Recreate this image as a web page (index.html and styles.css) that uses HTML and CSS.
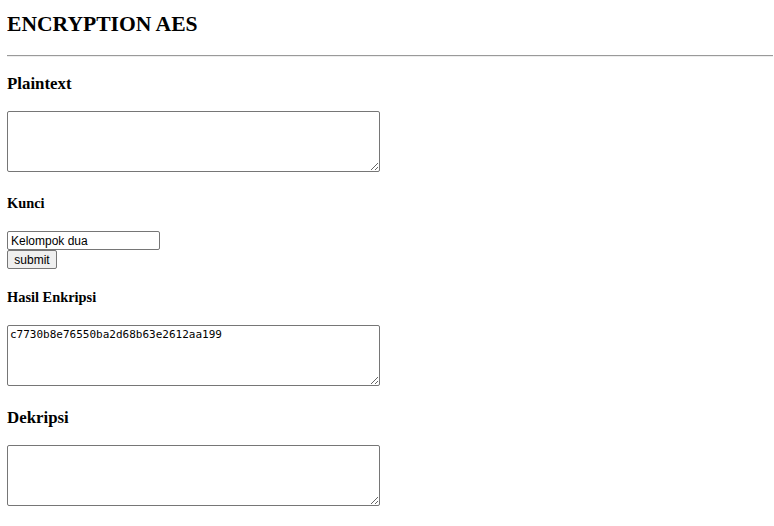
FILE: index.html
```html
<!DOCTYPE html>
<html>
<head>
<meta charset="utf-8">
<title>Encryption AES</title>
<link rel="stylesheet" href="styles.css">
</head>
<body>
<h2 class="title">ENCRYPTION AES</h2>
<hr class="rule">
<form class="form">
<h3 class="label-lg label-first">Plaintext</h3>
<textarea class="area"></textarea>
<h4 class="label-sm label-kunci">Kunci</h4>
<input class="key" type="text" value="Kelompok dua">
<button class="btn" type="button">submit</button>
<h4 class="label-sm label-hasil">Hasil Enkripsi</h4>
<textarea class="area">c7730b8e76550ba2d68b63e2612aa199</textarea>
<h3 class="label-lg label-dekripsi">Dekripsi</h3>
<textarea class="area"></textarea>
</form>
</body>
</html>
```
FILE: styles.css
```css
html, body {
  background: #fff;
}
body {
  margin: 0 1px 0 7px;
  padding-top: 1px;
  font-family: "Liberation Serif", "Times New Roman", serif;
  color: #000;
}
.title {
  font-size: 21.6px;
  line-height: 25px;
  font-weight: bold;
  margin: 11px 0 18px;
}
.rule {
  margin: 0;
  border: 0;
  border-top: 1px solid #9a9a9a;
  border-bottom: 1px solid #eee;
  height: 0;
}
.form {
  margin: 0;
}
.label-lg {
  font-size: 16.85px;
  line-height: 20px;
  font-weight: bold;
  margin: 0;
}
.label-sm {
  font-size: 14.4px;
  line-height: 17px;
  font-weight: bold;
  margin: 0;
}
.label-first {
  margin: 17px 0;
}
.label-kunci {
  margin: 23px 0 19px;
}
.label-hasil {
  margin: 20px 0 19px;
}
.label-dekripsi {
  margin: 22px 0 17px;
}
.area {
  box-sizing: border-box;
  display: block;
  width: 373px;
  height: 61px;
  font-family: "DejaVu Sans Mono", monospace;
  font-size: 11px;
  padding: 2px;
  border: 1px solid #767676;
  border-radius: 2px;
  margin: 0;
}
.key {
  box-sizing: border-box;
  display: block;
  width: 153px;
  height: 19px;
  font-family: "Liberation Sans", Arial, sans-serif;
  font-size: 12px;
  padding: 0 3px;
  border: 1px solid #767676;
  border-radius: 2px;
  margin: 0;
}
.btn {
  box-sizing: border-box;
  display: block;
  width: 50px;
  height: 19px;
  font-family: "Liberation Sans", Arial, sans-serif;
  font-size: 12px;
  padding: 0;
  text-align: center;
  border: 1px solid #767676;
  border-radius: 2px;
  background: #efefef;
  color: #000;
  margin: 0;
}
```
